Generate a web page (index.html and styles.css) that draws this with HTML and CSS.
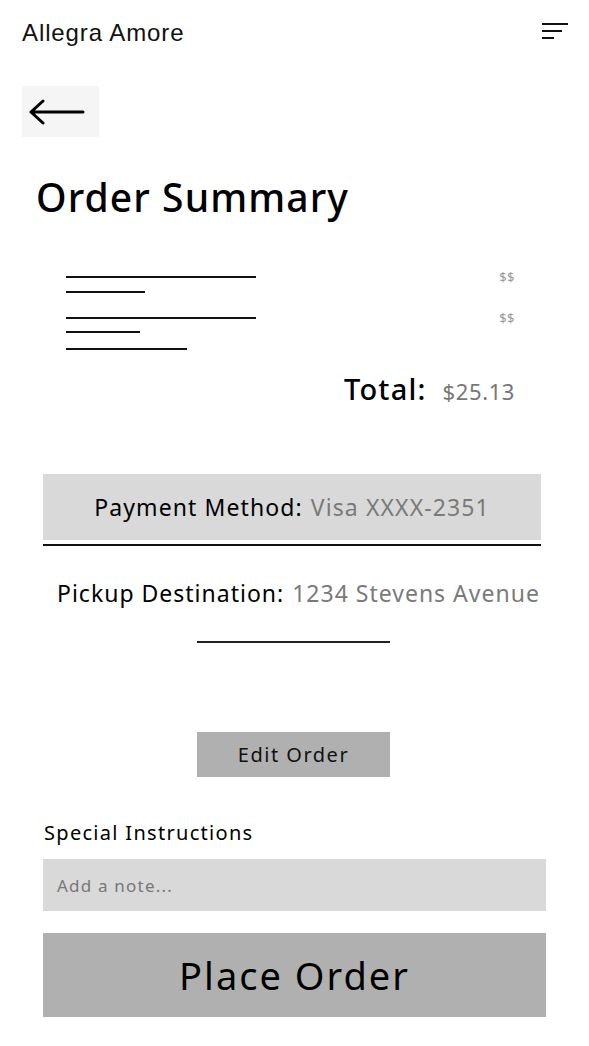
FILE: index.html
```html
<!DOCTYPE html>
<html lang="en">
<head>
<meta charset="utf-8">
<title>Order Summary - Allegra Amore</title>
<link rel="stylesheet" href="styles.css">
</head>
<body>
<div class="page">
  <header class="topbar">
    <div class="brand">Allegra Amore</div>
    <button class="menu" aria-label="Menu">
      <svg width="28" height="18" viewBox="0 0 28 18"><line x1="1" y1="2" x2="27" y2="2" stroke="#111" stroke-width="2"/><line x1="1" y1="9" x2="21" y2="9" stroke="#111" stroke-width="2"/><line x1="1" y1="16" x2="13" y2="16" stroke="#111" stroke-width="2"/></svg>
    </button>
  </header>

  <div class="backrow">
    <button class="back" aria-label="Back">
      <svg width="56" height="30" viewBox="0 0 56 30"><path d="M2 15 H54 M14 4 L2 15 L14 26" fill="none" stroke="#000" stroke-width="3" stroke-linecap="round" stroke-linejoin="round"/></svg>
    </button>
  </div>

  <h1 class="title">Order Summary</h1>

  <section class="items">
    <div class="item">
      <div class="lines">
        <span class="ln w190"></span>
        <span class="ln w79 g13"></span>
      </div>
      <div class="price">$$</div>
    </div>
    <div class="item">
      <div class="lines">
        <span class="ln w190"></span>
        <span class="ln w74 g12"></span>
        <span class="ln w121 g15"></span>
      </div>
      <div class="price">$$</div>
    </div>
  </section>

  <div class="total"><span class="total-label">Total:</span><span class="total-value">$25.13</span></div>

  <div class="payment"><span class="lbl">Payment Method:</span><span class="val">Visa XXXX-2351</span></div>
  <div class="rule"></div>

  <div class="pickup"><span class="lbl">Pickup Destination:</span><span class="val">1234 Stevens Avenue</span></div>
  <div class="short-rule"></div>

  <div class="edit-wrap"><button class="edit">Edit Order</button></div>

  <div class="special">Special Instructions</div>
  <div class="note">Add a note...</div>
  <button class="place">Place Order</button>
</div>
</body>
</html>
```

FILE: styles.css
```css
* { box-sizing: border-box; }
html, body { margin: 0; padding: 0; background: #fff; }
body { font-family: "Noto Sans", "DejaVu Sans", sans-serif; color: #000; }
button { font-family: inherit; border: 0; padding: 0; cursor: pointer; }

.page { width: 589px; height: 1046px; display: flex; flex-direction: column; }

.topbar { display: flex; justify-content: space-between; align-items: center; padding: 16px 20px 0 22px; height: 50px; }
.brand { font-family: "Liberation Sans", sans-serif; font-size: 24px; letter-spacing: 0.9px; color: #111; }
.menu { background: none; width: 28px; height: 18px; margin-top: -4px; }

.backrow { padding: 36px 0 0 22px; }
.back { width: 77px; height: 51px; background: #f5f5f5; display: flex; align-items: center; justify-content: center; padding-right: 8px; }

.title { margin: 38px 0 0 36px; font-size: 39px; font-weight: 500; letter-spacing: 1.1px; line-height: 44px; }

.items { padding: 57px 74px 0 66px; display: flex; flex-direction: column; gap: 24px; }
.item { display: flex; justify-content: space-between; align-items: flex-start; }
.lines { display: flex; flex-direction: column; }
.ln { display: block; height: 2px; background: #111; }
.g12 { margin-top: 12px; }
.g13 { margin-top: 13px; }
.g15 { margin-top: 15px; }
.w190 { width: 190px; }
.w79 { width: 79px; }
.w74 { width: 74px; }
.w121 { width: 121px; }
.price { font-size: 13px; color: #999; line-height: 1; margin-top: -5px; letter-spacing: 0.5px; }

.total { display: flex; justify-content: flex-end; align-items: baseline; padding: 19px 74px 0 0; }
.total-label { font-size: 29px; font-weight: 500; letter-spacing: 1.2px; }
.total-value { font-size: 22px; color: #777; margin-left: 16px; letter-spacing: 0.6px; }

.payment { margin: 66px 48px 0 43px; height: 66px; background: #d9d9d9; display: flex; align-items: center; justify-content: center; font-size: 23px; letter-spacing: 1.1px; }
.lbl { color: #000; margin-right: 8px; }
.val { color: #7a7a7a; }
.rule { margin: 4px 48px 0 43px; height: 2px; background: #111; }

.pickup { margin: 31px 0 0 57px; font-size: 23px; letter-spacing: 1px; display: flex; }
.short-rule { margin: 32px 0 0 197px; width: 193px; height: 2px; background: #222; }

.edit-wrap { padding: 89px 0 0 197px; }
.edit { width: 193px; height: 45px; background: #b0b0b0; font-size: 20px; color: #111; letter-spacing: 1.5px; }

.special { margin: 42px 0 0 44px; font-size: 20px; letter-spacing: 1.3px; }
.note { margin: 13px 43px 0 43px; height: 52px; background: #d9d9d9; padding-left: 14px; display: flex; align-items: center; font-size: 17px; color: #777; letter-spacing: 1.2px; }
.place { margin: 22px 43px 0 43px; height: 84px; background: #b0b0b0; font-size: 38px; color: #000; letter-spacing: 2px; }
```
